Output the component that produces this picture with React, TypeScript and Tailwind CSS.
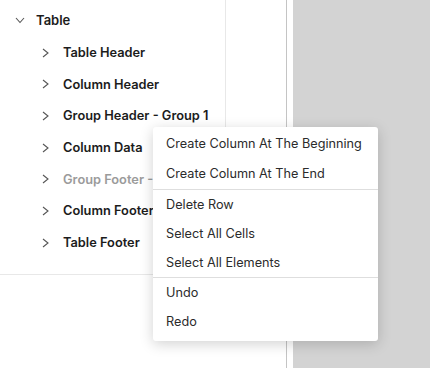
const font = { fontFamily: "Inter, 'Noto Sans', sans-serif" };

function Chevron({ open }: { open?: boolean }) {
    if (open) {
        return (
            <svg width="10" height="7" viewBox="0 0 10 7" className="shrink-0">
                <polyline points="1,1 5,5.5 9,1" fill="none" stroke="#555" strokeWidth="1.1" />
            </svg>
        );
    }
    return (
        <svg width="7" height="10" viewBox="0 0 7 10" className="shrink-0">
            <polyline points="1,1 6,5 1,9" fill="none" stroke="#555" strokeWidth="1.1" />
        </svg>
    );
}

const children = [
    { label: "Table Header" },
    { label: "Column Header" },
    { label: "Group Header - Group 1" },
    { label: "Column Data" },
    { label: "Group Footer - Group 1", muted: true },
    { label: "Column Footer" },
    { label: "Table Footer" },
];

const menuGroups = [
    ["Create Column At The Beginning", "Create Column At The End"],
    ["Delete Row", "Select All Cells", "Select All Elements"],
    ["Undo", "Redo"],
];

export default function App() {
    return (
        <div className="relative flex h-[368px] w-[430px] overflow-hidden bg-white" style={font}>
            {/* Tree panel */}
            <div className="flex w-[287px] shrink-0 border-r border-[#c4c4c4]">
                <div className="h-[275px] w-[226px] shrink-0 border-r border-b border-[#e8e8e8] pt-[5px]">
                    <div className="flex h-[31.7px] items-center pl-[15px]">
                        <Chevron open />
                        <span className="ml-[11px] text-[13px] font-semibold text-[#1c1c1c]">Table</span>
                    </div>
                    {children.map((c) => (
                        <div key={c.label} className="flex h-[31.7px] items-center pl-[42px]">
                            <Chevron />
                            <span
                                className={`ml-[14px] whitespace-nowrap text-[12.8px] font-semibold ${c.muted ? "text-[#9b9b9b]" : "text-[#1c1c1c]"}`}
                            >
                                {c.label}
                            </span>
                        </div>
                    ))}
                </div>
            </div>
            <div className="w-[6px] shrink-0 bg-white" />
            <div className="flex-1 bg-[#d3d3d3]" />

            {/* Context menu */}
            <div className="absolute left-[153px] top-[127px] w-[225px] rounded-[3px] bg-white pt-[2px] pb-[5px] shadow-[0_3px_14px_rgba(0,0,0,0.18)]">
                {menuGroups.map((group, gi) => (
                    <div key={gi} className={gi > 0 ? "border-t border-[#dedede]" : ""}>
                        {group.map((item) => (
                            <div
                                key={item}
                                className={`flex items-center pl-[13px] text-[12.7px] text-[#2b2b2b] ${gi === 0 ? "h-[30px]" : "h-[29px]"}`}
                            >
                                {item}
                            </div>
                        ))}
                    </div>
                ))}
            </div>
        </div>
    );
}
